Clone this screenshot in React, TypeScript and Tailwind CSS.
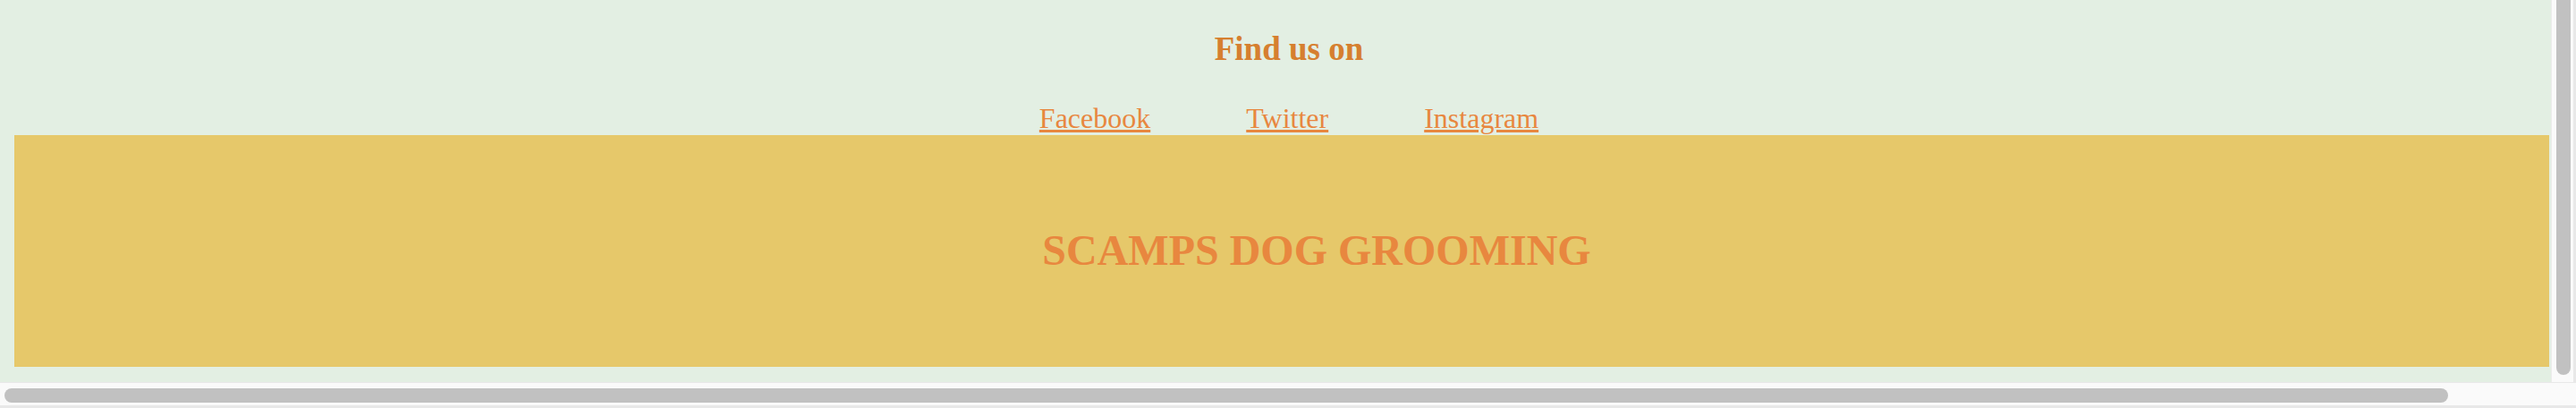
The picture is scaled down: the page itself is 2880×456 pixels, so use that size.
import React from 'react';

const links = ['Facebook', 'Twitter', 'Instagram'];

const App: React.FC = () => {
  return (
    <div className="w-[2880px] h-[456px] flex flex-col bg-[#fafafa] overflow-hidden font-['Liberation_Serif',serif]">
      <div className="flex h-[427px]">
        <div className="w-[2852px] h-full bg-[#e3efe3] flex flex-col">
          <section className="pl-[30px] pt-[36px] text-center">
            <h2 className="text-[37px] leading-none h-[37px] font-bold text-[#d67f2f]">Find us on</h2>
            <nav className="mt-[43px] h-[35px] flex justify-center gap-[107px]">
              {links.map((l) => (
                <a key={l} href="#" className="text-[32px] leading-none text-[#e8873f] underline">
                  {l}
                </a>
              ))}
            </nav>
          </section>
          <header className="ml-[16px] w-[2834px] h-[259px] bg-[#e6c86a] pt-[105px] pl-[78px] text-center">
            <h1 className="text-[48px] leading-none font-bold text-[#e8873f]">SCAMPS DOG GROOMING</h1>
          </header>
        </div>
        <div className="flex-1 border-l border-[#ebebeb] border-r-[3px] border-r-[#e8e8e8] pl-[5px]">
          <div className="w-4 h-[419px] rounded-b-full bg-[#c1c1c1]" />
        </div>
      </div>
      <div className="h-[29px] border-t border-[#e8e8e8] border-b-[3px] border-b-[#e8e8e8] pt-[6px] pl-[5px]">
        <div className="w-[2732px] h-4 rounded-full bg-[#c1c1c1]" />
      </div>
    </div>
  );
};

export default App;
